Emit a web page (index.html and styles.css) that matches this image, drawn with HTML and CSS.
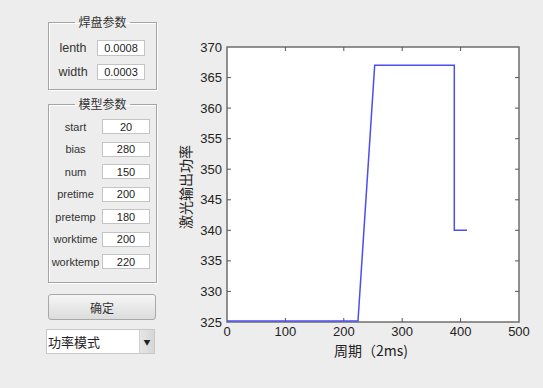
FILE: index.html
```html
<!DOCTYPE html>
<html lang="zh-CN">
<head>
    <meta charset="UTF-8">
    <title>激光功率</title>
    <link rel="stylesheet" href="styles.css">
</head>
<body>
    <div class="side">
        <fieldset class="panel pad">
            <legend>焊盘参数</legend>
            <div class="rows">
                <label>lenth</label><input type="text" value="0.0008">
                <label>width</label><input type="text" value="0.0003">
            </div>
        </fieldset>

        <fieldset class="panel model">
            <legend>模型参数</legend>
            <div class="rows">
                <label>start</label><input type="text" value="20">
                <label>bias</label><input type="text" value="280">
                <label>num</label><input type="text" value="150">
                <label>pretime</label><input type="text" value="200">
                <label>pretemp</label><input type="text" value="180">
                <label>worktime</label><input type="text" value="200">
                <label>worktemp</label><input type="text" value="220">
            </div>
        </fieldset>

        <button class="ok">确定</button>

        <div class="dropdown">
            <span>功率模式</span>
            <span class="arrow">&#9660;</span>
        </div>
    </div>

    <svg class="chart" width="383" height="388" viewBox="160 0 383 388">
        <rect class="plot" x="227" y="47" width="292" height="275"/>
        <g class="ticks">
            <!-- y ticks, left and right -->
            <path d="M227 291.4h4M227 260.9h4M227 230.3h4M227 199.8h4M227 169.2h4M227 138.7h4M227 108.1h4M227 77.6h4"/>
            <path d="M519 291.4h-4M519 260.9h-4M519 230.3h-4M519 199.8h-4M519 169.2h-4M519 138.7h-4M519 108.1h-4M519 77.6h-4"/>
            <!-- x ticks, bottom and top -->
            <path d="M285.4 322v-4M343.8 322v-4M402.2 322v-4M460.6 322v-4"/>
            <path d="M285.4 47v4M343.8 47v4M402.2 47v4M460.6 47v4"/>
        </g>
        <polyline class="line" points="227,321 358,321 374.7,65.3 454.3,65.3 454.3,230.3 467,230.3"/>
        <g class="ylabels">
            <text x="222" y="326.5">325</text>
            <text x="222" y="295.9">330</text>
            <text x="222" y="265.4">335</text>
            <text x="222" y="234.8">340</text>
            <text x="222" y="204.3">345</text>
            <text x="222" y="173.7">350</text>
            <text x="222" y="143.2">355</text>
            <text x="222" y="112.6">360</text>
            <text x="222" y="82.1">365</text>
            <text x="222" y="51.5">370</text>
        </g>
        <g class="xlabels">
            <text x="227" y="336">0</text>
            <text x="285.4" y="336">100</text>
            <text x="343.8" y="336">200</text>
            <text x="402.2" y="336">300</text>
            <text x="460.6" y="336">400</text>
            <text x="519" y="336">500</text>
        </g>
        <text class="title" x="371" y="355.5">周期（2ms)</text>
        <text class="title" transform="translate(191 187) rotate(-90)">激光输出功率</text>
    </svg>
</body>
</html>
```

FILE: styles.css
```css
body {
    margin: 0;
    height: 388px;
    background-color: #ededed;
    font-family: "Liberation Sans", "Noto Sans CJK SC", sans-serif;
    color: #222;
    display: flex;
    overflow: hidden;
}

.side {
    width: 110px;
    margin-left: 47px;
    padding-top: 15px;
    display: flex;
    flex-direction: column;
}

.panel {
    margin: 0 0 0 1px;
    padding: 0;
    border: 1px solid #a4a4a4;
    box-shadow: inset 1px 1px 0 #fff, 1px 1px 0 #fff;
    min-width: 0;
}

.panel legend {
    margin: 0 auto;
    padding: 0 3px;
    font-family: "Noto Sans CJK SC", sans-serif;
    font-size: 12px;
    line-height: 14px;
    color: #333;
}

.rows {
    display: grid;
    align-items: center;
}

.rows label {
    text-align: center;
    color: #333;
}

.rows input {
    box-sizing: border-box;
    width: 48px;
    margin: 0;
    padding: 0;
    border: 1px solid #c4c4c4;
    background-color: #fff;
    font-family: "Liberation Sans", sans-serif;
    font-size: 11px;
    text-align: center;
    color: #222;
    outline: none;
}

.pad .rows {
    grid-template-columns: 1fr 48px;
    row-gap: 8px;
    padding: 11px 11px 9px 0;
}

.pad .rows label {
    font-size: 12.5px;
}

.pad .rows input {
    height: 16px;
}

.model {
    margin-top: 7px;
}

.model .rows {
    grid-template-columns: 1fr 48px;
    row-gap: 7.5px;
    padding: 8px 6px 13px 0;
}

.model .rows label {
    font-size: 11px;
}

.model .rows input {
    height: 15px;
}

.ok {
    margin: 11px 0 0 1px;
    width: 108px;
    height: 26px;
    border: 1px solid #a8a8a8;
    border-radius: 3px;
    background: linear-gradient(#f6f6f6, #dcdcdc);
    font-family: "Noto Sans CJK SC", sans-serif;
    font-size: 12px;
    color: #333;
    padding: 0;
}

.dropdown {
    margin-top: 9px;
    margin-left: -1px;
    width: 109px;
    height: 25px;
    box-sizing: border-box;
    border: 1px solid #c8c8c8;
    background-color: #fff;
    display: flex;
    align-items: stretch;
    justify-content: space-between;
    font-family: "Noto Sans CJK SC", sans-serif;
    font-size: 13px;
}

.dropdown span {
    display: flex;
    align-items: center;
    padding-left: 1px;
}

.dropdown .arrow {
    width: 14px;
    padding: 0;
    justify-content: center;
    font-size: 7px;
    color: #222;
    background: linear-gradient(to right, #e6e6e6, #d6d6d6);
    border-left: 1px solid #d0d0d0;
}

.chart {
    margin-left: 3px;
    display: block;
}

.plot {
    fill: #fff;
    stroke: #6e6e6e;
    stroke-width: 1.5;
}

.ticks path {
    stroke: #555;
    stroke-width: 1;
    fill: none;
}

.line {
    fill: none;
    stroke: #4d4df2;
    stroke-width: 1.5;
}

.ylabels text,
.xlabels text {
    font-family: "Liberation Sans", sans-serif;
    font-size: 13px;
    fill: #222;
}

.ylabels text {
    text-anchor: end;
}

.xlabels text {
    text-anchor: middle;
}

.title {
    font-family: "Noto Sans CJK SC", sans-serif;
    font-size: 14px;
    fill: #222;
    text-anchor: middle;
}
```
